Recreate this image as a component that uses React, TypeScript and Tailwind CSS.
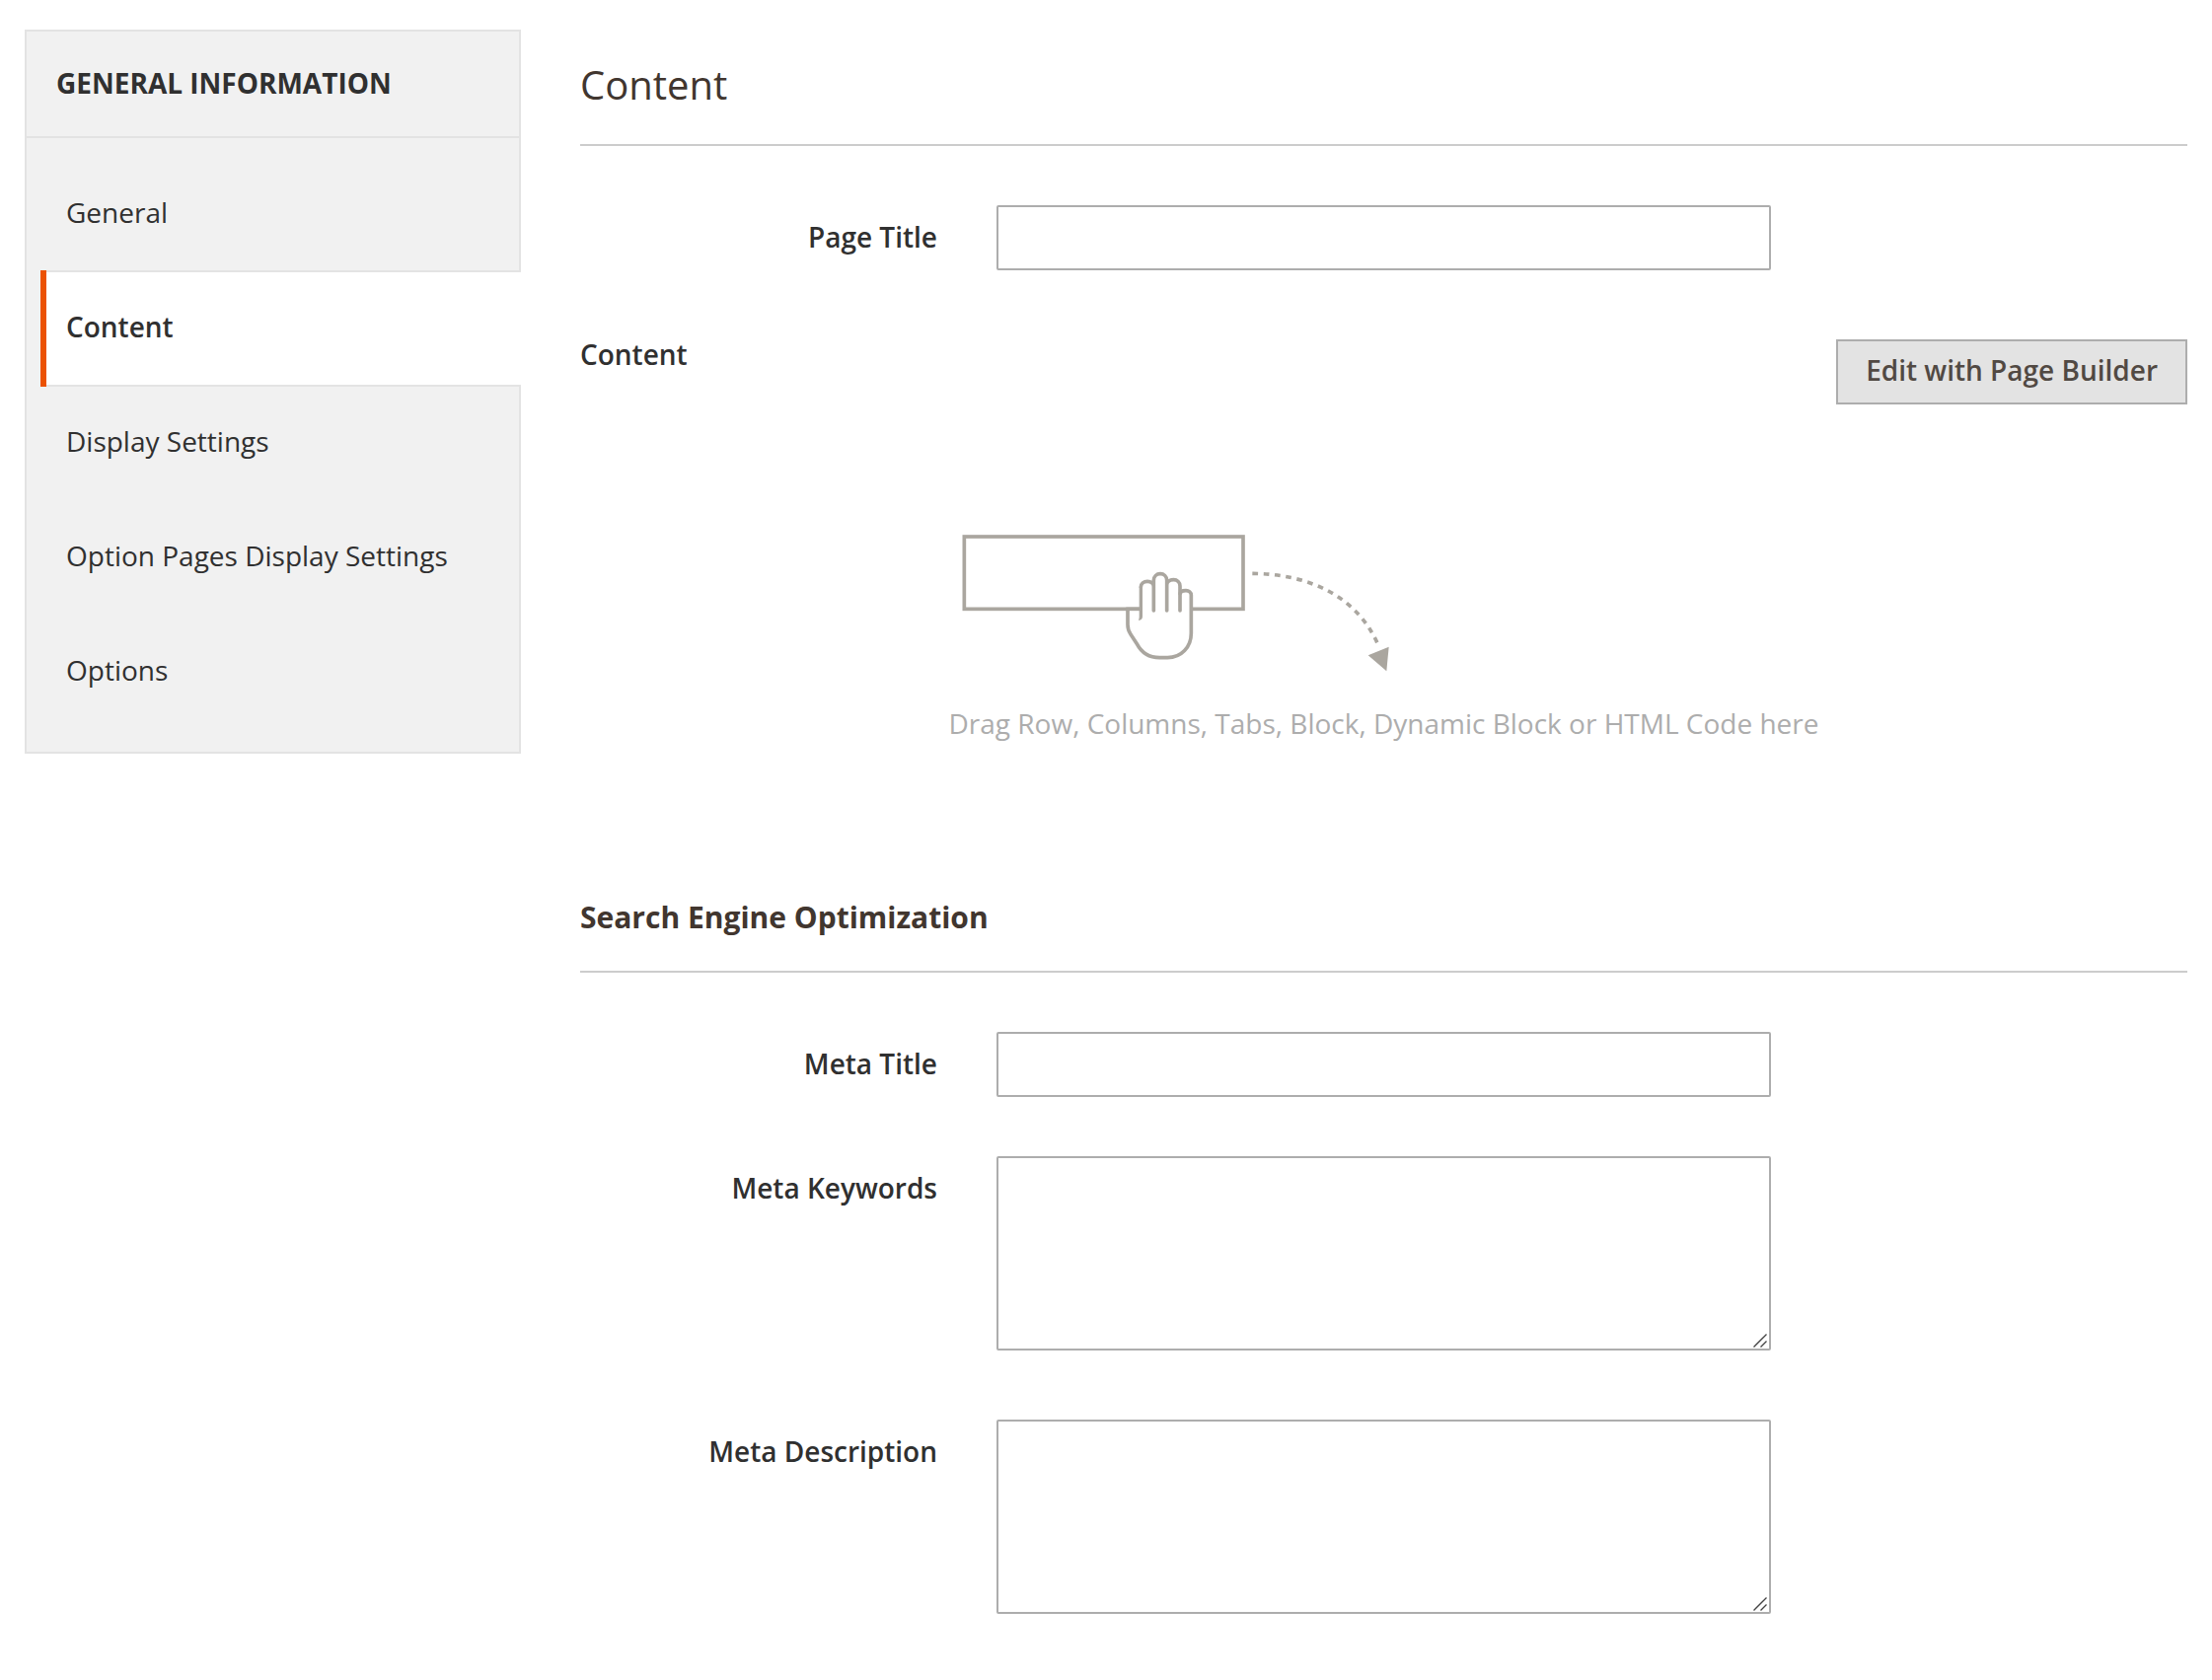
import { useState } from "react";
import type { ReactNode } from "react";

const TABS = ["General", "Content", "Display Settings", "Option Pages Display Settings", "Options"];

function Sidebar() {
  const [active, setActive] = useState("Content");
  return (
    <aside className="border-2 border-[#e3e3e3] bg-[#f1f1f1]">
      <h2 className="border-b-2 border-[#e3e3e3] pt-[31px] pb-[33px] pl-[30px] text-[28px] leading-[42px] font-bold uppercase">
        General Information
      </h2>
      <nav className="pt-[18px] pb-6 pl-[14px]">
        {TABS.map((tab) => (
          <a
            key={tab}
            href="#"
            aria-current={tab === active ? "page" : undefined}
            onClick={(e) => {
              e.preventDefault();
              setActive(tab);
            }}
            className={
              tab === active
                ? "relative -mr-[2px] -mb-[2px] block rounded-r-[2px] border-y-2 border-[#e3e3e3] bg-white pt-[34px] pb-[38px] pl-[26px] text-[28px] leading-[42px] font-semibold before:absolute before:-inset-y-[2px] before:left-0 before:w-[6px] before:bg-[#eb5202]"
                : "-mb-[2px] block border-y-2 border-transparent pt-[34px] pb-[38px] pl-[26px] text-[28px] leading-[42px]"
            }
          >
            {tab}
          </a>
        ))}
      </nav>
    </aside>
  );
}

function Field({ id, label, children }: { id: string; label: string; children: ReactNode }) {
  return (
    <div className="grid grid-cols-[422fr_785fr_422fr]">
      <label htmlFor={id} className="pt-[13px] pr-[60px] text-right text-[28px] leading-[38px] font-semibold">
        {label}
      </label>
      {children}
    </div>
  );
}

function TextField({ id, label }: { id: string; label: string }) {
  return (
    <Field id={id} label={label}>
      <input
        id={id}
        type="text"
        className="h-[66px] w-full min-w-0 rounded-[2px] border-2 border-[#adadad] bg-white px-5 text-[28px]"
      />
    </Field>
  );
}

function AreaField({ id, label }: { id: string; label: string }) {
  return (
    <Field id={id} label={label}>
      <div className="relative">
        <textarea
          id={id}
          className="block h-[197px] w-full min-w-0 resize-y rounded-[2px] border-2 border-[#adadad] bg-white px-5 py-3 text-[28px] [&::-webkit-resizer]:appearance-none [&::-webkit-resizer]:bg-white"
        />
        <svg
          viewBox="0 0 14 14"
          width="14"
          height="14"
          stroke="#444"
          strokeWidth="1.4"
          className="pointer-events-none absolute right-1 bottom-[3px]"
          aria-hidden="true"
        >
          <path d="M0.5 13.5 L13.5 0.5 M7.5 13.5 L13.5 7.5" />
        </svg>
      </div>
    </Field>
  );
}

function DragIllustration() {
  return (
    <svg viewBox="96 60 1320 432" width="440" height="144" fill="none" stroke="#aaa69f" aria-hidden="true">
      <rect x="112" y="72" width="848" height="220" strokeWidth="11" />
      <path
        d="M609 292 V340 Q609 356 618 369 L637 398 C652 427 675 440 706 440 H730 C772 440 802 408 802 366 V250 C802 241 795 236 786 236 C776 236 768 240 768 248 V222 C768 211 760 203 748 203 C736 203 728 210 728 219 V205 C728 193 719 185 708 185 C697 185 688 193 688 205 V226 C688 215 680 208 669 208 C658 208 650 215 650 226 V292 Z"
        fill="#fff"
        stroke="none"
      />
      <path
        d="M609 292 V340 Q609 356 618 369 L637 398 C652 427 675 440 706 440 H730 C772 440 802 408 802 366 V250 C802 241 795 236 786 236 C776 236 768 240 768 248"
        strokeWidth="11"
      />
      <path d="M604 292 H650" strokeWidth="11" />
      <path
        d="M649 225 C649 215 658 208 669 208 C680 208 688 215 688 224 M728 219 C728 210 736 203 748 203 C760 203 768 211 768 222 V297 M688 297 V205 C688 193 697 185 708 185 C719 185 728 193 728 205 V297"
        strokeWidth="11"
        strokeLinecap="round"
      />
      <path d="M644 224 H654 V315 Q654 326 642 327 L644 318 Z" fill="#aaa69f" stroke="none" />
      <path d="M988 184 C1160 186 1305 252 1370 400" strokeWidth="11" strokeDasharray="17 17" />
      <path d="M1340 433 L1403 407 L1396 481 Z" fill="#aaa69f" stroke="none" />
    </svg>
  );
}

export default function App() {
  return (
    <div className="grid grid-cols-[503fr_1629fr] items-start gap-x-[60px] bg-white px-[25px] py-[30px] font-['Open_Sans',sans-serif] text-[#303030]">
      <Sidebar />
      <main className="min-w-0">
        <h1 className="border-b-2 border-[#cccccc] pt-7 pb-8 text-[40px] leading-[56px] text-[#41362f]">Content</h1>
        <div className="pt-[60px]">
          <TextField id="page-title" label="Page Title" />
        </div>

        <section aria-label="Page content" className="pt-[70px]">
          <div className="flex items-start justify-between">
            <span className="-mt-1 text-[28px] leading-[38px] font-semibold">Content</span>
            <button
              type="button"
              className="border-2 border-[#adadad] bg-[#e3e3e3] px-7 pt-[10px] pb-[14px] text-[28px] leading-[38px] font-semibold text-[#514943]"
            >
              Edit with Page Builder
            </button>
          </div>
          <div className="flex justify-center pt-[130px]">
            <div className="flex flex-col gap-[30px]">
              <div className="pl-[10px]">
                <DragIllustration />
              </div>
              <p className="text-[28px] leading-[38px] text-[#adadad]">
                Drag Row, Columns, Tabs, Block, Dynamic Block or HTML Code here
              </p>
            </div>
          </div>
        </section>

        <h2 className="mt-[149px] border-b-2 border-[#cccccc] pt-2 pb-[33px] text-[30px] leading-[42px] font-bold text-[#41362f]">
          Search Engine Optimization
        </h2>
        <div className="flex flex-col pt-[60px]">
          <TextField id="meta-title" label="Meta Title" />
          <div className="mt-[60px] flex flex-col gap-[70px]">
            <AreaField id="meta-keywords" label="Meta Keywords" />
            <AreaField id="meta-description" label="Meta Description" />
          </div>
        </div>
      </main>
    </div>
  );
}
